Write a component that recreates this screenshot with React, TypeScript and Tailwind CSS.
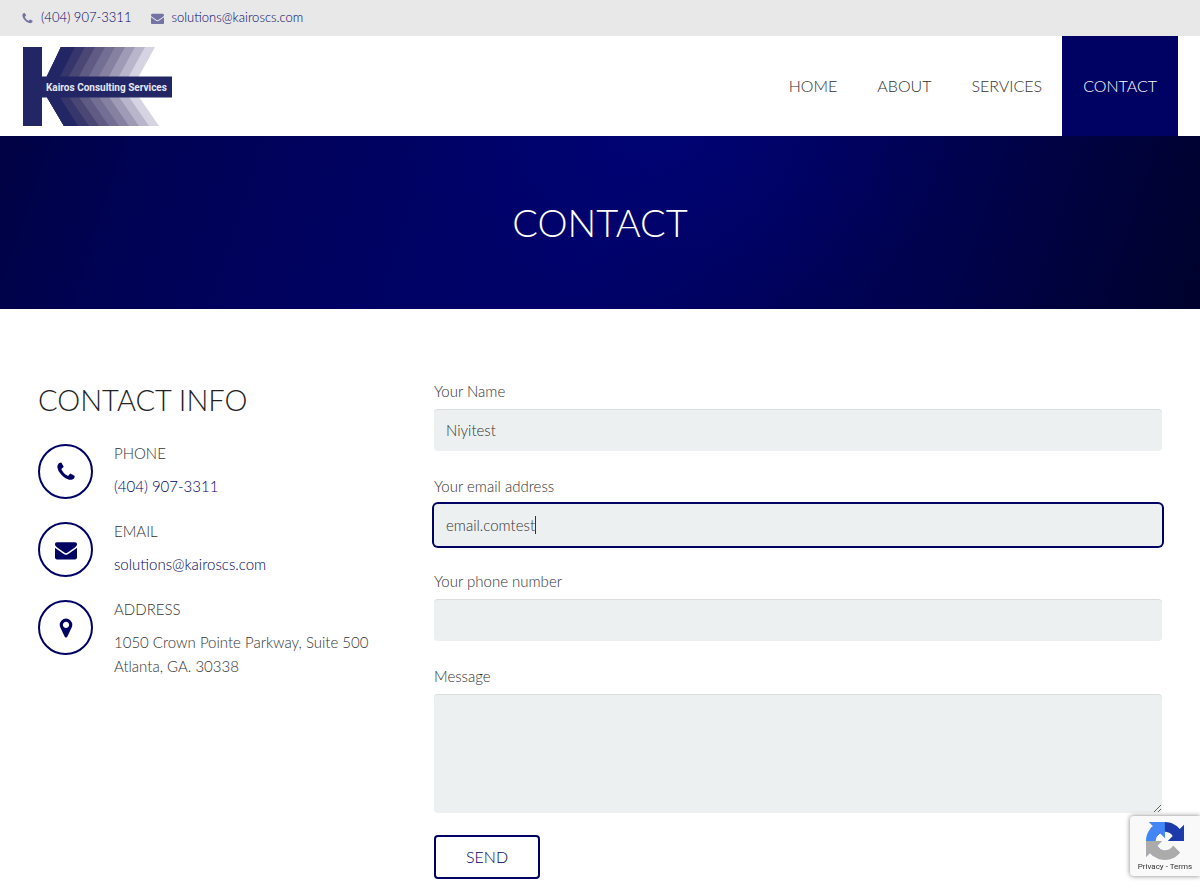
import { useId, type ReactNode } from "react";

type IconProps = { className?: string };

function PhoneIcon({ className }: IconProps) {
  return (
    <svg viewBox="0 0 1792 1792" fill="currentColor" className={className} aria-hidden="true">
      <path d="M1600 1240q0 27-10 70.5t-21 68.5q-21 50-122 106-94 51-186 51-27 0-53-3.5t-57-12.5-47-14.5-55.5-20.5-49.5-18q-98-35-175-83-127-79-264-216t-216-264q-48-77-83-175-3-9-18-49.5t-20.5-55.5-14.5-47-12.5-57-3.5-53q0-92 51-186 56-101 106-122 25-11 68.5-21t70.5-10q14 0 21 3 18 6 53 76 11 19 30 54t35 63.5 31 53.5q3 4 17.5 25t21.5 35.5 7 28.5q0 20-28.5 50t-62 55-62 53-28.5 46q0 9 5 22.5t8.5 20.5 14 24 11.5 19q76 137 174 235t235 174q2 1 19 11.5t24 14 20.5 8.5 22.5 5q18 0 46-28.5t53-62 55-62 50-28.5q14 0 28.5 7t35.5 21.5 25 17.5q25 15 53.5 31t63.5 35 54 30q70 35 76 53 3 7 3 21z" />
    </svg>
  );
}

function EnvelopeIcon({ className }: IconProps) {
  return (
    <svg viewBox="0 0 1792 1792" fill="currentColor" className={className} aria-hidden="true">
      <path d="M1792 710v794q0 66-47 113t-113 47h-1472q-66 0-113-47t-47-113v-794q44 49 101 87 362 246 497 345 57 42 92.5 65.5t94.5 48 110 24.5h2q51 0 110-24.5t94.5-48 92.5-65.5q170-123 498-345 57-39 100-87zm0-294q0 79-49 151t-122 123q-376 261-468 325-10 7-42.5 31t-54 38.5-52 32.5-57.5 27-50 9h-2q-23 0-50-9t-57.5-27-52-32.5-54-38.5-42.5-31q-91-64-262-182.5t-205-142.5q-62-42-117-115.5t-55-136.5q0-78 41.5-130t118.5-52h1472q65 0 112.5 47t47.5 113z" />
    </svg>
  );
}

function MarkerIcon({ className }: IconProps) {
  return (
    <svg viewBox="0 0 1792 1792" fill="currentColor" className={className} aria-hidden="true">
      <path d="M1152 640q0-106-75-181t-181-75-181 75-75 181 75 181 181 75 181-75 75-181zm256 0q0 109-33 179l-364 774q-16 33-47.5 52t-67.5 19-67.5-19-46.5-52l-365-774q-33-70-33-179 0-212 150-362t362-150 362 150 150 362z" />
    </svg>
  );
}

// Drawn widest first, so that each darker stripe covers the one behind it.
const stripes = ["#d6d4e2", "#b9b6cc", "#9f9bb6", "#8680a1", "#736e93", "#5f5b84", "#4a4775", "#36356c"];

function Logo() {
  return (
    <svg viewBox="0 0 149 79" className="h-[79px] w-[149px]" role="img" aria-label="Kairos Consulting Services">
      {stripes.map((fill, i) => {
        const right = 132 - i * 10;
        return <path key={fill} fill={fill} d={`M38 0H${right}l-16.500 30H24zM24 50h${right - 40}l20 29H41z`} />;
      })}
      <path fill="#232664" d="M0 0h19v29.500h4.500L38 0h14L37 29.500h112v21H37L55 79H41L24 50.500h-5V79H0z" />
      <text x="23" y="44" fill="#e6e6f2" fontSize="10" fontWeight="700" fontFamily="Roboto, sans-serif">
        Kairos Consulting Services
      </text>
    </svg>
  );
}

function RecaptchaLogo() {
  return (
    <svg viewBox="0 0 64 64" className="size-[38px]" aria-hidden="true">
      <path
        fill="#1c3aa9"
        d="M64 31.955l-.033-1.370V4.687l-7.160 7.160C50.948 4.674 42.033.093 32.050.093c-10.390 0-19.622 4.960-25.458 12.640l11.736 11.860a15.550 15.550 0 0 1 4.754-5.334c2.050-1.600 4.952-2.906 8.968-2.906.485 0 .86.057 1.135.163 4.976.393 9.288 3.140 11.828 7.124l-8.307 8.307L64 31.953"
      />
      <path
        fill="#4285f4"
        d="M31.862.094l-1.370.033H4.594l7.160 7.160C4.580 13.147 0 22.060 0 32.046c0 10.390 4.960 19.622 12.640 25.458L24.500 45.768a15.550 15.550 0 0 1-5.334-4.754c-1.600-2.050-2.906-4.952-2.906-8.968 0-.485.057-.86.163-1.135.393-4.976 3.140-9.288 7.124-11.828l8.307 8.307L31.860.095"
      />
      <path
        fill="#ababab"
        d="M.001 32.045l.033 1.370v25.898l7.160-7.160c5.860 7.173 14.774 11.754 24.760 11.754 10.390 0 19.622-4.960 25.458-12.640l-11.736-11.860a15.550 15.550 0 0 1-4.754 5.334c-2.050 1.600-4.952 2.906-8.968 2.906-.485 0-.86-.057-1.135-.163-4.976-.393-9.288-3.140-11.828-7.124l8.307-8.307c-10.522.040-22.400.066-27.295-.005"
      />
    </svg>
  );
}

const nav = ["HOME", "ABOUT", "SERVICES"];

function InfoItem({ icon, title, children }: { icon: ReactNode; title: string; children: ReactNode }) {
  return (
    <div className="flex items-start gap-[21px]">
      <div className="flex size-[55px] shrink-0 items-center justify-center rounded-full border-2 border-[#000263] text-[#000263]">
        {icon}
      </div>
      <div>
        <h3 className="mb-3 leading-[18px]">{title}</h3>
        <div className="leading-6">{children}</div>
      </div>
    </div>
  );
}

const fieldClass =
  "block w-full rounded bg-[#ecf0f1] px-3 text-[15px] font-light shadow-[inset_0_1px_0_rgba(0,0,0,0.08)] outline-none focus:shadow-[0_0_0_2px_#000263]";

function Field({ label, type = "text", value, focused }: { label: string; type?: string; value?: string; focused?: boolean }) {
  const id = useId();
  return (
    <div className="mb-[23px]">
      <label htmlFor={id} className="mb-[6px] block leading-6">{label}</label>
      <div className="relative">
        <input
          id={id}
          type={type}
          defaultValue={value}
          autoFocus={focused}
          className={`${fieldClass} h-[42px] ${focused ? "caret-transparent" : ""}`}
        />
        {focused && <span className="absolute top-3 left-[101px] h-[18px] w-px bg-[#333333]" aria-hidden="true" />}
      </div>
    </div>
  );
}

export default function App() {
  return (
    <div className="min-h-screen bg-white font-['Lato',sans-serif] text-[15px] font-light text-[#333333]">
      <div className="flex h-9 items-center gap-5 bg-[#e8e8e8] px-[21px] text-[13px] text-[#000263]">
        <a href="tel:4049073311" className="flex items-center gap-[7px]">
          <PhoneIcon className="size-[13px] opacity-50" />
          (404) 907-3311
        </a>
        <a href="mailto:solutions@kairoscs.com" className="flex items-center gap-[7px]">
          <EnvelopeIcon className="size-[13px] opacity-50" />
          solutions@kairoscs.com
        </a>
      </div>

      <header className="flex h-[100px] items-center justify-between pr-[22px] pl-[23px]">
        <a href="#home"><Logo /></a>
        <nav className="flex h-full text-base">
          {nav.map((item) => (
            <a key={item} href={`#${item.toLowerCase()}`} className="flex items-center px-5">{item}</a>
          ))}
          <a href="#contact" aria-current="page" className="flex items-center bg-[#000263] px-[21px] text-white">CONTACT</a>
        </nav>
      </header>

      <section className="flex h-[173px] items-center justify-center bg-[radial-gradient(ellipse_24%_110%_at_57%_0%,rgba(0,4,140,0.35),transparent),linear-gradient(108deg,#000244_0%,#000254_12%,#00025e_26%,#000266_38%,#000268_50%,#00025c_64%,#00024a_80%,#00022c_100%)]">
        <h1 className="text-[38px] text-white">CONTACT</h1>
      </section>

      <main className="grid grid-cols-[1fr_2fr] gap-8 px-[38px] pt-[70px] pb-[11px]">
        <section>
          <h2 className="mb-[23px] text-[29px] leading-[42px] text-[#222222]">CONTACT INFO</h2>
          <div className="flex flex-col gap-[23px]">
            <InfoItem icon={<PhoneIcon className="size-[22px]" />} title="PHONE">
              <a href="tel:4049073311" className="text-[#000263]">(404) 907-3311</a>
            </InfoItem>
            <InfoItem icon={<EnvelopeIcon className="size-[22px]" />} title="EMAIL">
              <a href="mailto:solutions@kairoscs.com" className="text-[#000263]">solutions@kairoscs.com</a>
            </InfoItem>
            <InfoItem icon={<MarkerIcon className="size-[22px]" />} title="ADDRESS">
              <p>1050 Crown Pointe Parkway, Suite 500</p>
              <p>Atlanta, GA. 30338</p>
            </InfoItem>
          </div>
        </section>

        <form>
          <Field label="Your Name" value="Niyitest" />
          <Field label="Your email address" value="email.comtest" focused />
          <Field label="Your phone number" type="tel" />
          <div className="mb-[22px]">
            <label htmlFor="message" className="mb-[6px] block leading-6">Message</label>
            <textarea id="message" className={`${fieldClass} h-[119px] resize-y py-2`} />
          </div>
          <button type="button" className="h-11 rounded border-2 border-[#000263] px-[30px] text-base text-[#000263]">SEND</button>
        </form>
      </main>

      <aside className="fixed right-0 bottom-[14px] flex h-[60px] w-[70px] flex-col items-center rounded-l-sm bg-[#f9f9f9] pt-[6px] font-['Roboto',sans-serif] text-[8px] leading-[14px] font-normal text-[#333333] shadow-[0_0_5px_gray]">
        <RecaptchaLogo />
        <p>
          <a href="#privacy">Privacy</a> - <a href="#terms">Terms</a>
        </p>
      </aside>
    </div>
  );
}
